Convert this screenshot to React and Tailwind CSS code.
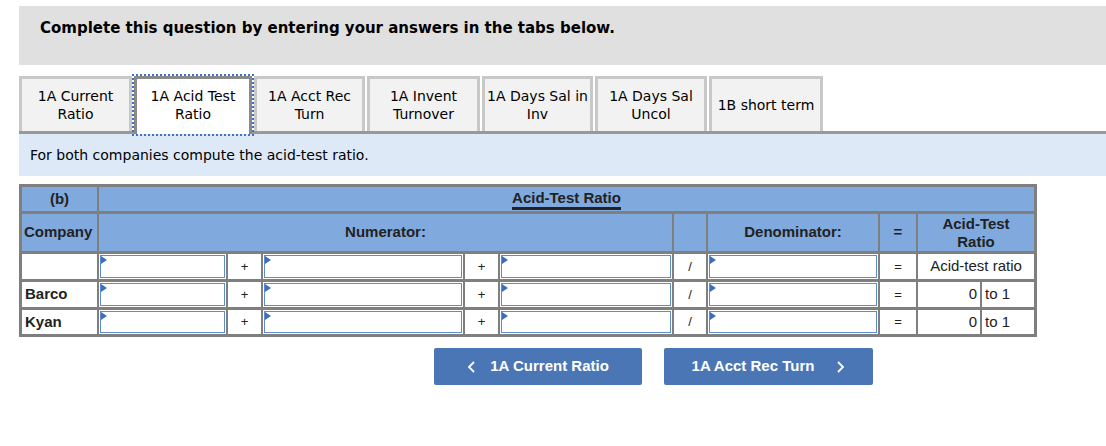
import React from 'react';

const tabs = [
  { label: ['1A Current', 'Ratio'], w: 'w-[113px]' },
  { label: ['1A Acid Test', 'Ratio'], w: 'w-[118px]', active: true },
  { label: ['1A Acct Rec', 'Turn'], w: 'w-[111px]' },
  { label: ['1A Invent', 'Turnover'], w: 'w-[113px]' },
  { label: ['1A Days Sal in', 'Inv'], w: 'w-[111px]' },
  { label: ['1A Days Sal', 'Uncol'], w: 'w-[112px]' },
  { label: ['1B short term'], w: 'w-[114px]' },
];

const verdana = { fontFamily: '"DejaVu Sans", Verdana, sans-serif' };

function AnswerInput() {
  return (
    <div className="relative h-full w-full bg-white p-[1px]">
      <div className="h-full w-full border border-[#5e8bcd] bg-white" />
      <span className="absolute left-[2px] top-[2px] h-0 w-0 border-y-[4px] border-l-[6px] border-y-transparent border-l-[#3d6fc0]" />
    </div>
  );
}

function DataRow({ company, result }) {
  return (
    <>
      <div className="flex items-center bg-white px-[3px] text-[15px] font-bold">{company}</div>
      <AnswerInput />
      <div className="flex items-center justify-center bg-white text-[13px]">+</div>
      <AnswerInput />
      <div className="flex items-center justify-center bg-white text-[13px]">+</div>
      <AnswerInput />
      <div className="flex items-center justify-center bg-white text-[13px]">/</div>
      <AnswerInput />
      <div className="flex items-center justify-center bg-white text-[13px]">=</div>
      {result ? (
        <>
          <div className="flex items-center justify-end bg-white pr-[3px] text-[15px]">0</div>
          <div className="flex items-center bg-white pl-[3px] text-[15px]">to 1</div>
        </>
      ) : (
        <div className="col-span-2 flex items-center justify-center bg-white text-[15px]">Acid-test ratio</div>
      )}
    </>
  );
}

export default function App() {
  return (
    <div className="h-[446px] w-[1106px] overflow-hidden bg-white pt-[6px] text-[#222]">
      {/* instructions banner */}
      <div className="ml-[19px] h-[59px] bg-[#e0e0e0] px-[21px] pt-[12px]" style={verdana}>
        <p className="text-[15px] font-bold leading-[20px] text-black">
          Complete this question by entering your answers in the tabs below.
        </p>
      </div>

      {/* tabs */}
      <div className="ml-[19px] mt-[11px] flex h-[58px] items-start gap-[2px] border-b-[3px] border-[#999]" style={verdana}>
        {tabs.map((t, i) =>
          t.active ? (
            <div
              key={i}
              className={`${t.w} relative z-10 flex h-[58px] flex-col items-center justify-center border-x-[3px] border-t-[3px] border-[#8a8a8a] bg-white pb-[3px] text-[14px] leading-[18px] text-black outline-2 outline-offset-0 outline-dotted outline-[#3f74c4]`}
            >
              {t.label.map((l) => (
                <span key={l}>{l}</span>
              ))}
            </div>
          ) : (
            <div
              key={i}
              className={`${t.w} flex h-[55px] flex-col items-center justify-center border-x-[3px] border-t-[3px] border-[#c8c8c8] bg-[#f2f2f2] text-[14px] leading-[18px] text-black`}
            >
              {t.label.map((l) => (
                <span key={l} className="whitespace-nowrap">{l}</span>
              ))}
            </div>
          )
        )}
      </div>

      <div className="ml-[19px] flex h-[42px] items-center bg-[#dde9f6] px-[11px] text-[14px] text-black" style={verdana}>
        For both companies compute the acid-test ratio.
      </div>

      {/* ratio table */}
      <div
        className="ml-[19px] mt-[8px] inline-grid grid-cols-[75px_127px_33px_200px_33px_172px_32px_170px_36px_62px_52px] grid-rows-[24px_37px_25px_25px_24px] gap-x-[2px] gap-y-[3px] bg-[#7f7f7f] p-[3px]"
        style={{ fontFamily: '"Liberation Sans", Arial, sans-serif' }}
      >
        <div className="flex items-center justify-center bg-[#80a9dd] text-[15px] font-bold">(b)</div>
        <div className="col-span-10 flex items-center justify-center bg-[#80a9dd]">
          <span className="border-b-[3px] border-[#222] text-[15px] font-bold leading-[18px]">Acid-Test Ratio</span>
        </div>

        <div className="flex items-center bg-[#80a9dd] px-[2px] text-[15px] font-bold">Company</div>
        <div className="col-span-5 flex items-center justify-center bg-[#80a9dd] text-[15px] font-bold">Numerator:</div>
        <div className="bg-[#80a9dd]" />
        <div className="flex items-center justify-center bg-[#80a9dd] text-[15px] font-bold">Denominator:</div>
        <div className="flex items-center justify-center bg-[#80a9dd] text-[15px] font-bold">=</div>
        <div className="col-span-2 flex flex-col items-center justify-center bg-[#80a9dd] text-[15px] font-bold leading-[18px]">
          <span>Acid-Test</span>
          <span>Ratio</span>
        </div>

        <DataRow company="" />
        <DataRow company="Barco" result />
        <DataRow company="Kyan" result />
      </div>

      {/* navigation */}
      <div className="mt-[11px] flex gap-[22px] pl-[434px]" style={{ fontFamily: '"Liberation Sans", Arial, sans-serif' }}>
        <button className="flex h-[37px] w-[208px] items-center justify-center gap-[14px] rounded-[2px] bg-[#4a76b6] text-[15px] font-bold text-white">
          <svg width="9" height="12" viewBox="0 0 9 12" fill="none" stroke="white" strokeWidth="1.8">
            <path d="M7 1L2 6l5 5" />
          </svg>
          <span>1A Current Ratio</span>
        </button>
        <button className="flex h-[37px] w-[209px] items-center justify-center gap-[22px] rounded-[2px] bg-[#4a76b6] text-[15px] font-bold text-white">
          <span>1A Acct Rec Turn</span>
          <svg width="9" height="12" viewBox="0 0 9 12" fill="none" stroke="white" strokeWidth="1.8">
            <path d="M2 1l5 5-5 5" />
          </svg>
        </button>
      </div>
    </div>
  );
}
